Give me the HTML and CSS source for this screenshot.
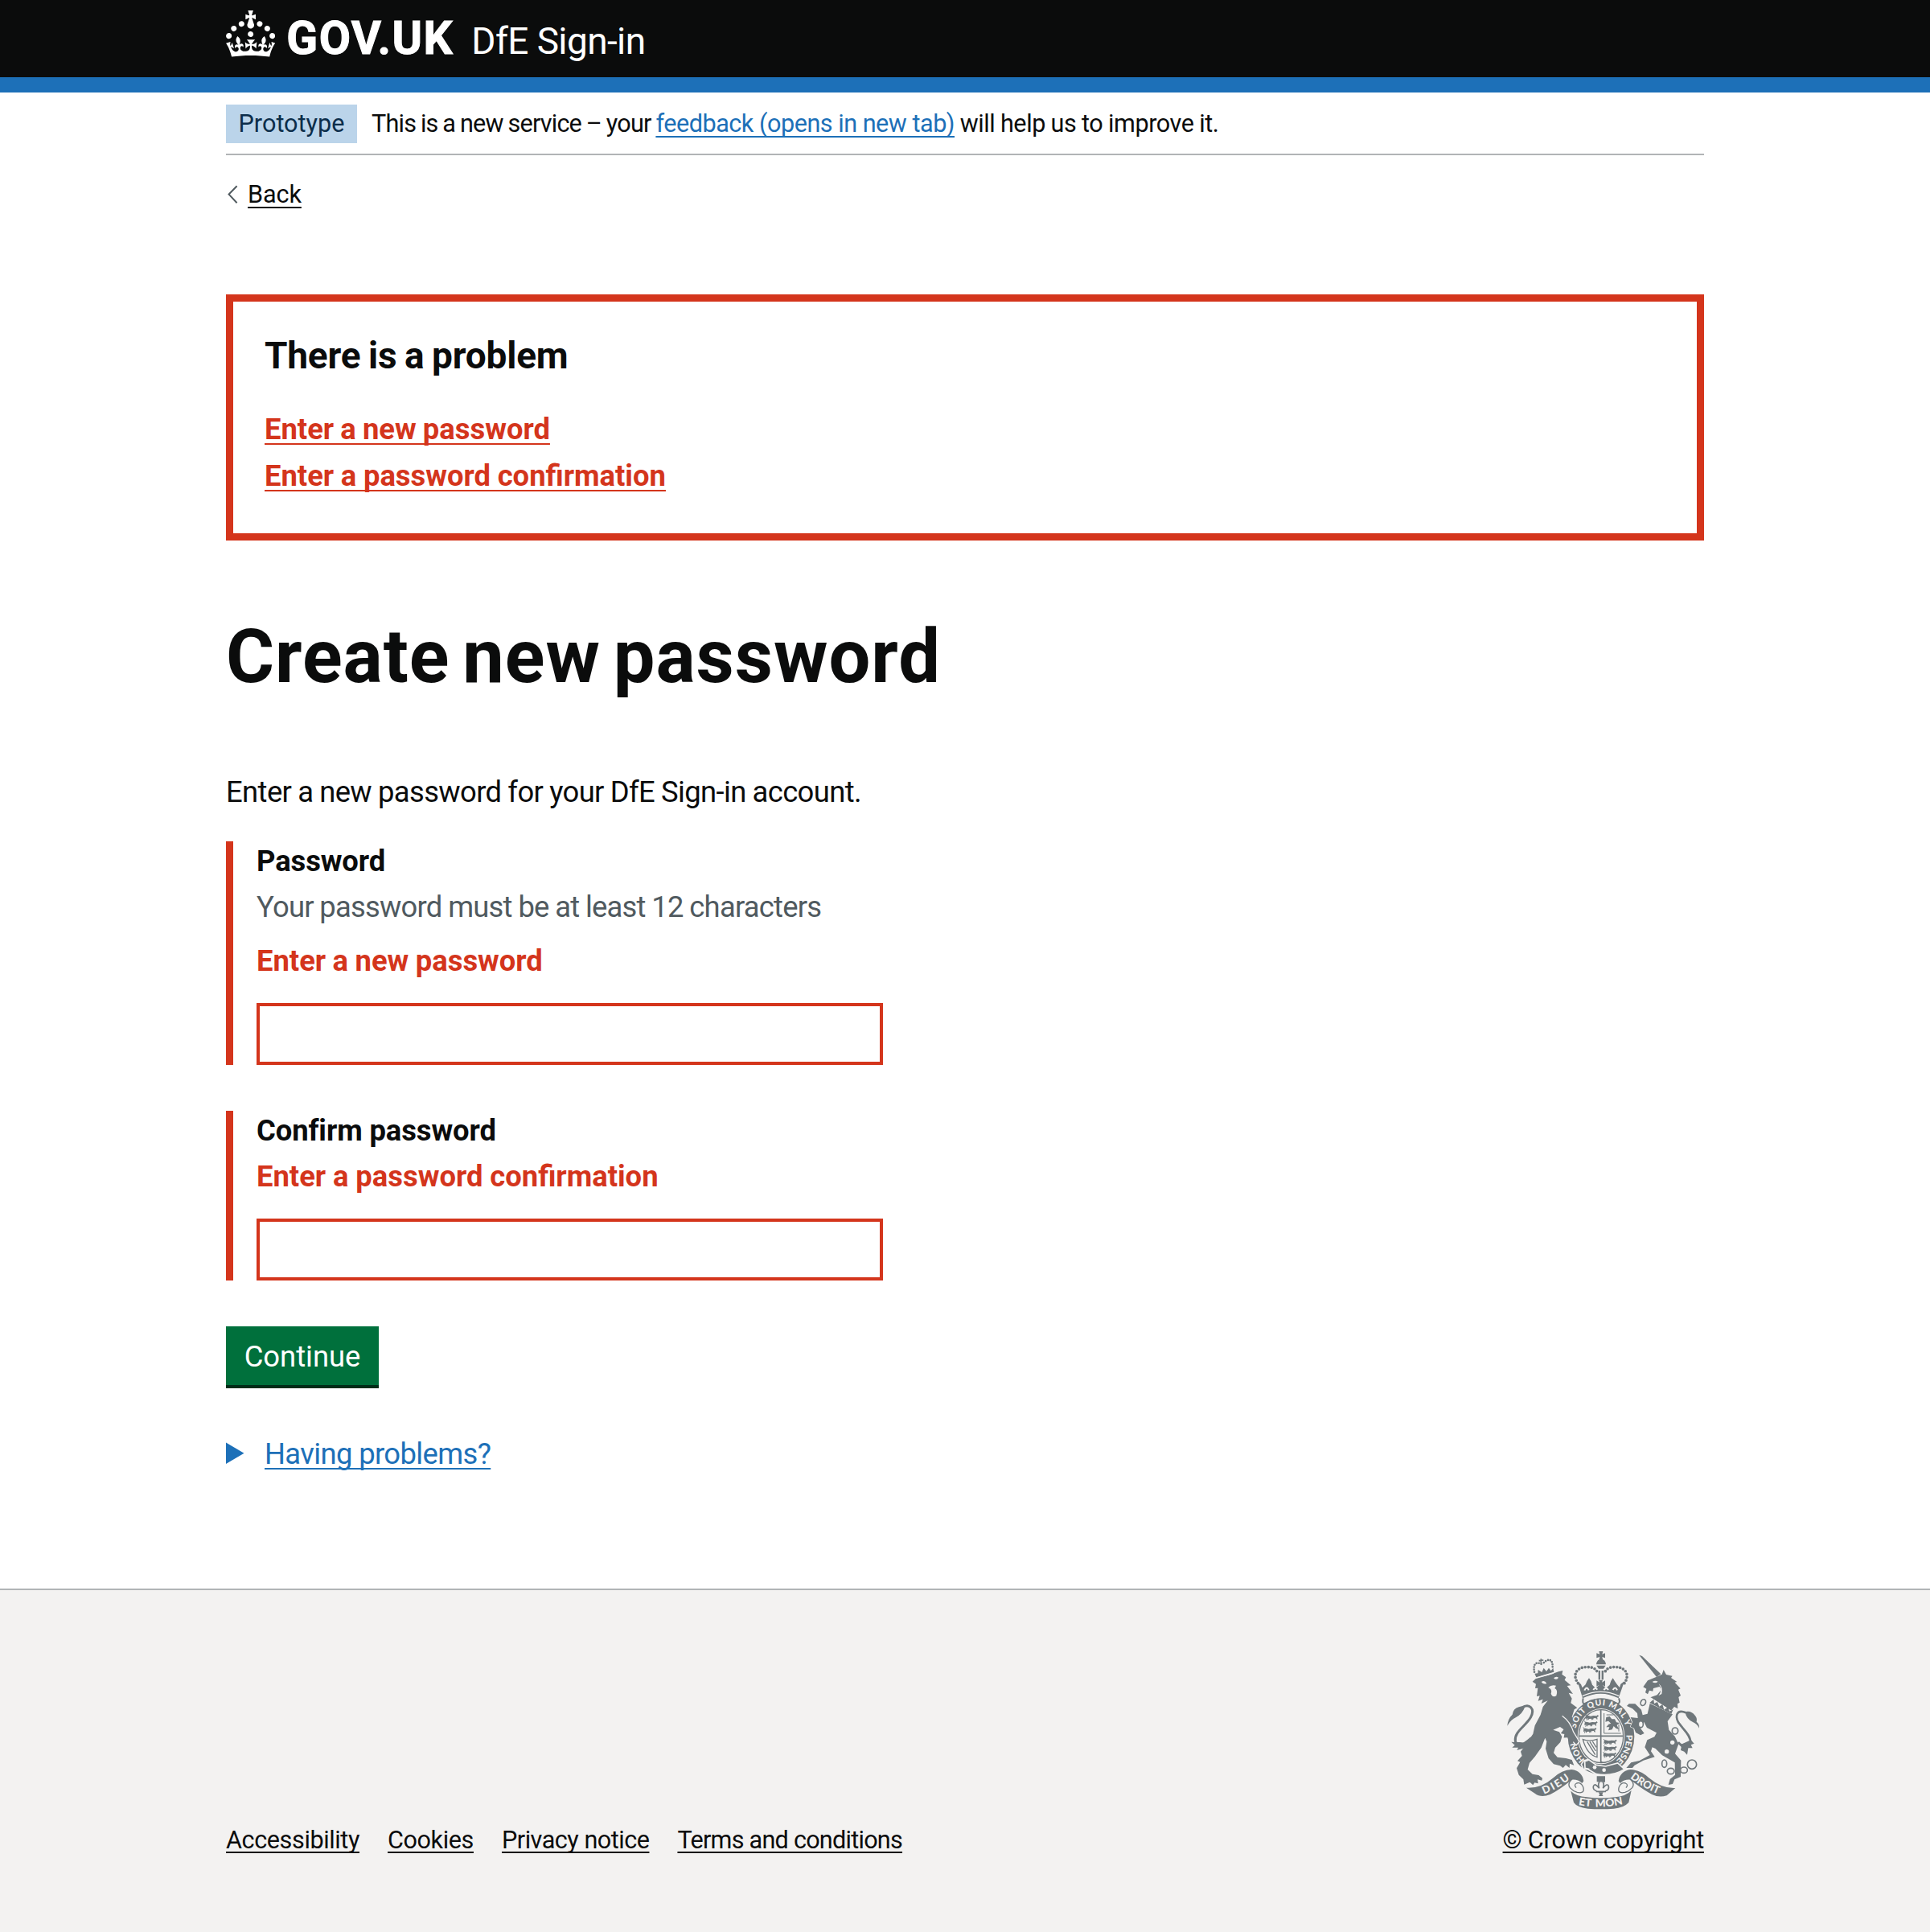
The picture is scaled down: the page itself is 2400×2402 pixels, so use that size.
FILE: index.html
```html
<!DOCTYPE html>
<html lang="en">
<head>
<meta charset="utf-8">
<title>Create new password - DfE Sign-in</title>
<link rel="stylesheet" href="styles.css">
</head>
<body>
<header class="header">
  <div class="container header-inner">
    <svg class="crown" viewBox="0 0 32 30" aria-hidden="true"><path fill="currentColor" fill-rule="evenodd" d="M22.6 10.4c-1 .4-2-.1-2.4-1-.4-.9.1-2 1-2.4.9-.4 2 .1 2.4 1s-.1 2-1 2.4m-5.9 6.7c-.9.4-2-.1-2.4-1-.4-.9.1-2 1-2.4.9-.4 2 .1 2.4 1s-.1 2-1 2.4m10.8-3.7c-1 .4-2-.1-2.4-1-.4-.9.1-2 1-2.4.9-.4 2 .1 2.4 1s0 2-1 2.4m3.3 4.8c-1 .4-2-.1-2.4-1-.4-.9.1-2 1-2.4.9-.4 2 .1 2.4 1s-.1 2-1 2.4M17 4.7l2.3 1.2V2.5l-2.3.7-.2-.2.9-3h-3.4l.9 3-.2.2c-.1.1-2.3-.7-2.3-.7v3.4L15 4.7c.1.1.1.2.2.2l-1.3 4c-.1.2-.1.4-.1.6 0 1.1.8 2 1.9 2.2h.7c1-.2 1.9-1.1 1.9-2.1 0-.2 0-.4-.1-.6l-1.3-4c-.1-.2 0-.2.1-.3m-7.6 5.7c.9.4 2-.1 2.4-1 .4-.9-.1-2-1-2.4-.9-.4-2 .1-2.4 1s0 2 1 2.4m-5 3c.9.4 2-.1 2.4-1 .4-.9-.1-2-1-2.4-.9-.4-2 .1-2.4 1s.1 2 1 2.4m-3.2 4.8c.9.4 2-.1 2.4-1 .4-.9-.1-2-1-2.4-.9-.4-2 .1-2.4 1s0 2 1 2.4m14.8 11c4.4 0 8.6.3 12.3.8 1.1-4.5 2.4-7 3.7-8.8l-2.5-.9c.2 1.3.3 1.9 0 2.7-.4-.4-.8-1.1-1.1-2.3l-1.2 4c.7-.5 1.3-.8 2-.9-1.1 2.5-2.6 3.1-3.5 3-1.1-.2-1.7-1.2-1.5-2.1.3-1.2 1.5-1.5 2.1-.1 1.1-2.3-.8-3-2-2.3 1.9-1.9 2.1-3.5.6-5.6-2.1 1.6-2.1 3.2-1.2 5.5-1.2-1.4-3.2-.6-2.5 1.6.9-1.4 2.1-.5 1.9.8-.2 1.1-1.7 2.1-3.5 1.9-2.7-.2-2.9-2.1-2.9-3.6.7-.1 1.9.5 2.9 1.9l.4-4.3c-1.1 1.1-2.1 1.4-3.2 1.4.4-1.2 2.1-3 2.1-3h-5.4s1.7 1.9 2.1 3c-1.1 0-2.1-.2-3.2-1.4l.4 4.3c1-1.4 2.2-2 2.9-1.9-.1 1.5-.2 3.4-2.9 3.6-1.9.2-3.4-.8-3.5-1.9-.2-1.3 1-2.2 1.9-.8.7-2.3-1.2-3-2.5-1.6.9-2.2.9-3.9-1.2-5.5-1.5 2-1.3 3.7.6 5.6-1.2-.7-3.1 0-2 2.3.6-1.4 1.8-1.1 2.1.1.2.9-.3 1.9-1.5 2.1-.9.2-2.4-.5-3.5-3 .6 0 1.2.3 2 .9l-1.2-4c-.3 1.1-.7 1.9-1.1 2.3-.3-.8-.2-1.4 0-2.7l-2.9.9C1.3 23 2.6 25.5 3.7 30c3.7-.5 7.9-.8 12.3-.8"/></svg>
    <span class="logotype">GOV.UK</span>
    <span class="product">DfE Sign-in</span>
  </div>
</header>

<div class="container">
  <div class="phase-banner">
    <strong class="tag">Prototype</strong>
    <span class="phase-text"><span class="phase-intro">This is a new service – your </span><a class="link" href="#">feedback (opens in new tab)</a><span class="phase-end"> will help us to improve it.</span></span>
  </div>

  <a class="back" href="#">
    <svg class="chevron" viewBox="0 0 14 24" aria-hidden="true"><path d="M12.6 1.2 2.6 11.6l10 10.6" fill="none" stroke="#505a5f" stroke-width="2"/></svg>
    <span class="back-label">Back</span>
  </a>

  <main>
    <section class="error-summary">
      <h2 class="error-title">There is a problem</h2>
      <ul class="error-list">
        <li><a class="error-link first" href="#password">Enter a new password</a></li>
        <li><a class="error-link" href="#confirm">Enter a password confirmation</a></li>
      </ul>
    </section>

    <h1 class="title">Create new password</h1>
    <p class="lead">Enter a new password for your DfE Sign-in account.</p>

    <div class="group">
      <label class="label" for="password">Password</label>
      <div class="hint">Your password must be at least 12 characters</div>
      <p class="error-message">Enter a new password</p>
      <input class="input" id="password" type="password">
    </div>
    <div class="group">
      <label class="label" for="confirm">Confirm password</label>
      <p class="error-message tight">Enter a password confirmation</p>
      <input class="input" id="confirm" type="password">
    </div>

    <button class="button" type="button">Continue</button>

    <div class="details">
      <svg class="triangle" viewBox="0 0 23 28" aria-hidden="true"><path d="M0 .5 22.5 13.8 0 27Z" fill="#1d70b8"/></svg>
      <a class="details-label" href="#">Having problems?</a>
    </div>
  </main>
</div>

<footer class="footer">
  <div class="container footer-inner">
    <nav class="footer-links">
      <a class="flink" href="#">Accessibility</a>
      <a class="flink" href="#">Cookies</a>
      <a class="flink privacy" href="#">Privacy notice</a>
      <a class="flink terms" href="#">Terms and conditions</a>
    </nav>
    <div class="copyright">
      <svg class="crest" viewBox="0 0 810 660" aria-hidden="true">
        <defs>
          <path id="motto-start" d="M332 443A97 114 0 0 1 298 372"/>
          <path id="motto-top" d="M299 327A97 114 0 0 1 487 327"/>
          <path id="motto-end" d="M487 350A95 112 0 0 1 441 453"/>
          <path id="ribbon-left" d="M180 572Q235 550 279 514"/>
          <path id="ribbon-mid" d="M308 612Q392 628 480 608"/>
          <path id="ribbon-right" d="M501 511Q548 548 608 572"/>
          <g id="passant"><path d="M2 7q4-6 10-3l8 2 10-2 12 1 5-4 3 5-6 4 2 6-7-3-8 1-2 6-5-5-9 1-5 5 0-7-9 2z"/><path d="M0 0q6 2 4 8M8 14l-3 7M22 12l3 8M40 12l4 6" fill="none" stroke="#6f777b" stroke-width="3"/></g>
        </defs>
        <!-- lion -->
        <g fill="#6f777b">
          <path d="M137 152 152 139 196 128 234 115 250 111 247 125 262 136 257 146 280 166 266 168 288 198 272 194 284 215 280 232 304 250 293 256 284 284 303 308 302 344 313 376 303 386 291 371 275 381 270 360 254 361 257 347 243 345 254 331 240 321 214 332 237 340 247 358 241 378 222 398 216 418 230 434 262 438 284 444 292 464 276 458 275 474 261 463 251 474 240 466 216 460 197 438 186 402 190 376 184 362 170 398 146 432 126 455 119 480 137 497 160 501 174 512 172 521 156 517 158 532 145 529 139 538 127 527 106 536 103 517 86 500 78 475 91 452 81 448 98 429 93 413 106 396 139 347 146 316 167 276 176 246 194 223 170 234 176 218 158 224 164 205 153 207 157 176 147 177 150 161Z"/>
          <path d="M145 122 151 136 217 116 214 101 206 112 198 101 189 114 179 101 172 117 158 108 157 121Z"/>
          <path d="M169 67v18M161 74l17-2" stroke="#6f777b" stroke-width="5"/>
          <path d="M43 317Q45 291 62 275 65 253 86 247 98 241 108 248 100 271 76 285 57 293 43 317Z"/>
          <path d="M96 250C126 230 148 254 130 286 111 319 68 339 73 374 81 403 112 382 133 362" fill="none" stroke="#6f777b" stroke-width="9"/>
          <path d="M72 378 58 377 71 389 61 398 84 398 79 408 108 400 123 382 90 378Z"/>
        </g>
        <g fill="none" stroke="#6f777b" stroke-width="8" stroke-linecap="round" stroke-dasharray="0 9"><path d="M144 116C137 76 160 80 172 88M212 97C213 62 190 68 176 85"/></g>
        <g fill="#f3f2f1"><path d="M170 153q12-9 20 6-12 5-20-6ZM216 139q9-8 18-2-8 12-18 2ZM196 174q10-11 29-7l-5 10q13 6 6 28-14 8-20-8 4-12-2-18Z"/></g>
        <path d="M150 139 216 120" stroke="#f3f2f1" stroke-width="4"/>

        <!-- imperial crown -->
        <g fill="#6f777b">
          <path d="M385 39h15l-3 11 11-4v18l-11-4 3 12h-15l3-12-12 4V46l12 4ZM375 88q2-19 18-20 16 1 18 20ZM376 92h34l-8 12h-18ZM383 111h7v34h-7ZM395 111h7v34h-7Z"/>
          <path d="M305 151 324 214Q392 180 458 214L480 151 466 161 462 174 452 162Q443 150 437 139 427 151 425 164L411 177 398 164 408 170V148L396 155 399 146H384L388 155 376 148V170L386 164 373 177 360 164Q357 150 348 139 339 150 335 163L323 175 318 162Z"/>
          <path d="M326 214Q322 234 330 235 392 203 456 235 466 231 459 214" fill="none" stroke="#6f777b" stroke-width="6"/>
        </g>
        <path d="M323 206Q392 174 460 206" fill="none" stroke="#f3f2f1" stroke-width="4"/>
        <path d="M331 185q8-18 16-1m17-1q6-12 15-1m24 1q10-12 17 0m17 0q9-16 16 1" fill="none" stroke="#f3f2f1" stroke-width="6"/>
        <path d="M307 158C286 130 298 100 336 98 354 96 372 102 377 113M480 158C500 130 488 100 450 98 432 96 414 102 409 113" fill="none" stroke="#6f777b" stroke-width="11" stroke-linecap="round" stroke-dasharray="0 12"/>

        <!-- garter and shield -->
        <ellipse cx="393" cy="356" rx="124" ry="142" fill="#6f777b"/>
        <ellipse cx="393" cy="356" rx="88" ry="104" fill="#f3f2f1"/>
        <ellipse cx="393" cy="356" rx="83" ry="99" fill="none" stroke="#6f777b" stroke-width="4"/>
        <path d="M392 258V452M312 355H474" stroke="#6f777b" stroke-width="5"/>
        <g fill="#6f777b">
          <use href="#passant" x="334" y="275"/><use href="#passant" x="330" y="299"/><use href="#passant" x="326" y="323"/>
          <use href="#passant" x="402" y="367"/><use href="#passant" x="402" y="391"/><use href="#passant" x="400" y="415"/>
          <path d="M412 285 425 282 433 292 444 292 450 304 462 306 452 315 460 331 448 326 440 318 434 331 420 334 424 322 412 322 421 311 430 308 420 299 409 302Z"/>
        </g>
        <path d="M404 270V345H467M413 276H440M459 312V338" fill="none" stroke="#6f777b" stroke-width="3"/>
        <path d="M325 368Q350 377 378 367V434Q340 424 325 368ZM341 376 371 425M351 376 373 411M361 375 375 397" fill="none" stroke="#6f777b" stroke-width="4"/>
        <path d="M384 456 393 449 412 456Z" fill="#6f777b"/>
        <path d="M328 447 345 442 375 463 410 468 455 456 480 479Q435 507 375 497L344 479 327 478 319 461Z" fill="#6f777b" stroke="#f3f2f1" stroke-width="5"/>
        <path d="M348 444 332 450 333 475 349 479" fill="none" stroke="#f3f2f1" stroke-width="5"/>
        <circle cx="369" cy="472" r="7" fill="#f3f2f1"/><circle cx="404" cy="482" r="7" fill="#f3f2f1"/>
        <g class="crest-text" font-size="31">
          <text><textPath href="#motto-start">HON</textPath></text>
          <text><textPath href="#motto-top" textLength="266" lengthAdjust="spacing">SOIT QUI MAL Y</textPath></text>
          <text><textPath href="#motto-end" textLength="108" lengthAdjust="spacingAndGlyphs">PENSE</textPath></text>
        </g>
        <path d="M250 282 284 305 292 345 303 362 309 376 298 387 289 373 275 383 268 361 254 361 257 347 243 345 254 331Z" fill="#6f777b"/>
        <path d="M248 280Q278 302 290 340L312 376 300 390 289 377" fill="none" stroke="#f3f2f1" stroke-width="4"/>

        <!-- unicorn -->
        <g fill="#6f777b">
          <path d="M535 53 546 57 616 124 600 135Z"/>
          <path d="M550 172 567 148 600 134 620 125 626 108 636 126 659 131 654 138 676 153 668 155 689 178 681 182 690 204 682 210 686 230 678 235 679 253 666 246 654 260 577 211 602 202 617 183 611 171 588 177 586 188 573 185 567 199 558 193 562 179Z"/>
          <path stroke="#f3f2f1" stroke-width="4" paint-order="stroke" d="M575 234 660 274 641 300 646 332 668 356 682 385 669 421 691 446 690 507 667 517 660 534 644 537 650 516 669 500 668 454 621 427 596 402 584 397 579 412 593 433 551 446 518 464 510 474 487 474 505 454 536 447 575 426 556 397 565 370 592 358 600 343 564 324 553 303 540 326 554 345 540 352 522 342 516 326 503 320 510 302 503 285 530 288 528 270 510 253 489 243 497 235 520 235 543 257 548 277 566 272Z"/>
          <path d="M759 326Q752 309 734 302 712 293 706 265 728 259 742 277 753 288 749 302 760 310 759 326Z"/>
          <path d="M709 268C676 253 668 280 681 304 695 326 728 351 726 377 718 401 698 398 681 378" fill="none" stroke="#6f777b" stroke-width="8"/>
          <path d="M670 372 688 388 728 370 740 383 728 388 734 400 718 400 714 425 703 413 690 408 692 396Z"/>
        </g>
        <path d="M578 211 660 263 655 273 574 231Z" fill="#f3f2f1"/>
        <path d="M574 231 655 273 662 256 648 263 643 247 628 257 622 237 610 245 603 228 591 234 589 218Z" fill="#6f777b"/>
        <path d="M584 153q11-7 21-1-10 9-21 1ZM608 160q17 14 11 38l-12 7q17-22 1-45Z" fill="#f3f2f1"/>
        <g fill="#f3f2f1" stroke="#6f777b" stroke-width="5">
          <ellipse cx="550" cy="230" rx="9" ry="12" transform="rotate(25 550 230)"/><ellipse cx="541" cy="311" rx="9" ry="12"/><ellipse cx="669" cy="336" rx="11" ry="12"/>
          <ellipse cx="629" cy="458" rx="9" ry="14"/><ellipse cx="653" cy="486" rx="13" ry="11"/><ellipse cx="702" cy="482" rx="13" ry="11"/><circle cx="732" cy="461" r="17"/>
        </g>
        <g fill="#f3f2f1"><circle cx="659" cy="379" r="8"/><circle cx="638" cy="413" r="8"/></g>

        <!-- ribbon -->
        <g fill="#6f777b">
          <path d="M114 548Q168 552 216 510 246 482 283 480 322 485 328 523L322 531Q306 516 284 518 238 555 203 573 168 586 146 569Z"/>
          <path d="M670 549Q620 552 570 510 540 482 503 480 464 485 458 523L464 531Q480 516 502 518 548 555 583 573 610 586 638 577Z"/>
          <path d="M280 560Q300 580 340 583 392 590 444 583 486 580 506 558L496 603Q478 623 440 626 392 630 344 626 302 620 291 603Z"/>
          <path d="M377 505h31v22l-31-1ZM383 565h18l-4 8 4 6h-17l4-6Z"/>
        </g>
        <path d="M284 516Q266 533 277 548 287 560 304 565 334 572 326 545 317 526 302 531 290 536 300 548M502 516Q520 533 509 548 499 560 482 565 452 572 460 545 469 526 484 531 496 536 486 548" fill="none" stroke="#6f777b" stroke-width="4"/>
        <path d="M393 516Q378 533 386 550 370 528 364 543 362 556 376 560M393 516Q408 533 400 550 416 528 421 543 424 556 409 560M374 562H411" fill="#f3f2f1" stroke="#6f777b" stroke-width="5"/>
        <g class="crest-text" font-size="39">
          <text><textPath href="#ribbon-left" textLength="112">DIEU</textPath></text>
          <text><textPath href="#ribbon-mid" textLength="168" lengthAdjust="spacingAndGlyphs" word-spacing="6">ET MON</textPath></text>
          <text><textPath href="#ribbon-right" textLength="120" lengthAdjust="spacingAndGlyphs">DROIT</textPath></text>
        </g>
      </svg>
      <a class="flink crown-link" href="#">© Crown copyright</a>
    </div>
  </div>
</footer>
</body>
</html>
```

FILE: styles.css
```css
* { box-sizing: border-box; }
body {
  margin: 0;
  background: #fff;
  color: #0b0c0c;
  font-family: Roboto, "Liberation Sans", sans-serif;
  font-size: 36.4px;
  line-height: 48px;
}
h1, h2, p, ul { margin: 0; padding: 0; }
ul { list-style: none; }
svg { display: block; flex: none; }
a {
  color: inherit;
  text-decoration: underline;
  text-decoration-thickness: 2px;
  text-underline-offset: 5px;
  text-decoration-skip-ink: none;
}
.container { width: 1838px; margin: 0 auto; }

.header { height: 115px; background: #0b0c0c; color: #fff; border-bottom: 19px solid #1d70b8; }
.header-inner { display: flex; align-items: flex-start; height: 96px; }
.crown { width: 61.3px; height: 57.5px; margin-top: 13px; }
.logotype {
  width: 234px;
  padding-left: 14px;
  margin-top: 14px;
  font-size: 57px;
  line-height: 67px;
  font-weight: 700;
  letter-spacing: 1.5px;
  -webkit-text-stroke: 1px #fff;
  white-space: nowrap;
}
.product {
  padding-left: 10px;
  margin-top: 23px;
  font-size: 46px;
  line-height: 57px;
  letter-spacing: -.6px;
}

.phase-banner {
  display: flex;
  align-items: flex-start;
  height: 78px;
  padding-top: 15px;
  border-bottom: 2px solid #b1b4b6;
  font-size: 30.6px;
}
.tag {
  width: 163px;
  height: 48px;
  margin-right: 18px;
  background: #bbd4ea;
  color: #0c2d4a;
  font-weight: 400;
  text-align: center;
}
.phase-text { white-space: pre; }
.phase-intro { letter-spacing: -.8px; word-spacing: -1px; }
.link { color: #1d70b8; letter-spacing: -.48px; }
.phase-end { letter-spacing: -.43px; word-spacing: -.5px; }

.back {
  display: flex;
  margin-top: 30px;
  font-size: 30.6px;
  line-height: 38px;
  text-decoration: none;
}
.chevron { width: 14px; height: 24px; margin: 7px 12px 0 1px; }
.back-label { text-decoration: underline; text-decoration-thickness: 2px; text-underline-offset: 5px; letter-spacing: -.1px; }

.error-summary {
  height: 306px;
  margin-top: 105px;
  padding: 39px 39px 0;
  border: 9px solid #d4351c;
}
.error-title { font-size: 46px; line-height: 57px; letter-spacing: -.2px; word-spacing: -1.6px; }
.error-list { display: grid; gap: 10px; margin-top: 39px; font-weight: 700; }
.error-link { color: #d4351c; word-spacing: -.4px; }
.error-link.first { word-spacing: -.9px; }

.title { margin-top: 97px; font-size: 91.9px; line-height: 96px; letter-spacing: 1px; word-spacing: -8px; }
.lead { margin-top: 96px; letter-spacing: -.6px; word-spacing: -.6px; }

.group { display: flex; flex-direction: column; margin-top: 37px; padding-left: 29px; border-left: 9px solid #d4351c; }
.group + .group { margin-top: 57px; }
.label { padding-top: 1px; font-weight: 700; letter-spacing: -.1px; }
.hint { margin-top: 9px; color: #505a5f; letter-spacing: -.78px; word-spacing: -.6px; }
.error-message { margin-top: 19px; color: #d4351c; font-weight: 700; word-spacing: -.6px; }
.error-message.tight { margin-top: 9px; word-spacing: -.2px; }
.input { width: 779px; height: 77px; margin-top: 28px; padding: 10px; border: 4px solid #d4351c; border-radius: 0; background: #fff; }

.button {
  display: block;
  width: 190px;
  height: 73px;
  margin-top: 57px;
  padding: 2px 0 0;
  border: 0;
  background: #00703c;
  box-shadow: 0 4px 0 #002d18;
  color: #fff;
  font: inherit;
}
.details { display: flex; margin-top: 62px; color: #1d70b8; }
.triangle { width: 23px; height: 28px; margin: 9px 25px 0 0; }
.details-label { letter-spacing: -.62px; }

.footer { height: 427px; margin-top: 143px; border-top: 2px solid #b1b4b6; background: #f3f2f1; }
.footer-inner {
  display: flex;
  justify-content: space-between;
  align-items: flex-end;
  height: 330px;
  font-size: 30.6px;
  line-height: 38px;
}
.footer-links { display: flex; gap: 35px; }
.flink { letter-spacing: -.4px; text-underline-offset: 4px; }
.privacy { letter-spacing: -.5px; }
.terms { letter-spacing: -.75px; }
.crown-link { letter-spacing: -.17px; }
.copyright { display: flex; flex-direction: column; align-items: flex-end; }
.crest { width: 270px; height: 220px; margin: 0 -11px 9px 0; }
.crest-text { fill: #f3f2f1; font-family: Lato, sans-serif; font-weight: 900; }
```
